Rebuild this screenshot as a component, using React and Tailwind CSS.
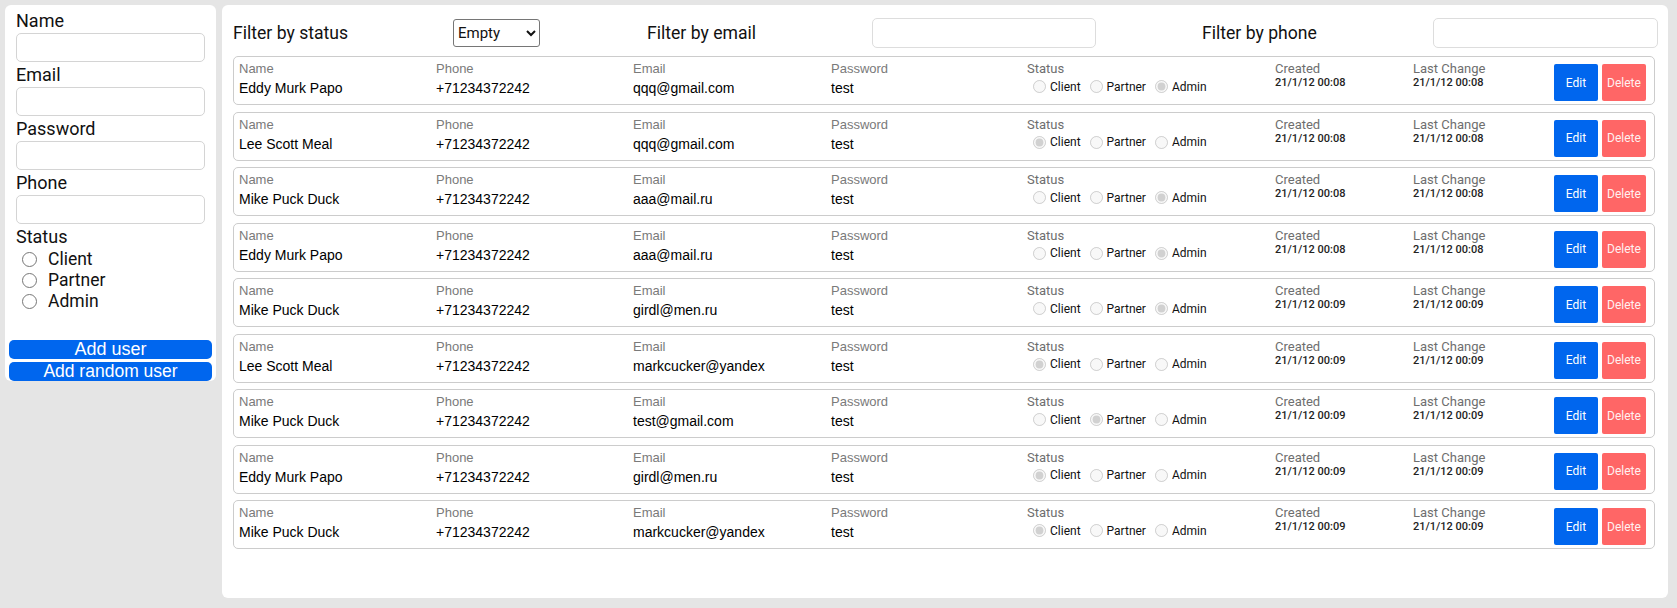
import React from "react";

const users = [
  { name: "Eddy Murk Papo", email: "qqq@gmail.com", status: "Admin", time: "00:08" },
  { name: "Lee Scott Meal", email: "qqq@gmail.com", status: "Client", time: "00:08" },
  { name: "Mike Puck Duck", email: "aaa@mail.ru", status: "Admin", time: "00:08" },
  { name: "Eddy Murk Papo", email: "aaa@mail.ru", status: "Admin", time: "00:08" },
  { name: "Mike Puck Duck", email: "girdl@men.ru", status: "Admin", time: "00:09" },
  { name: "Lee Scott Meal", email: "markcucker@yandex", status: "Client", time: "00:09" },
  { name: "Mike Puck Duck", email: "test@gmail.com", status: "Partner", time: "00:09" },
  { name: "Eddy Murk Papo", email: "girdl@men.ru", status: "Client", time: "00:09" },
  { name: "Mike Puck Duck", email: "markcucker@yandex", status: "Client", time: "00:09" },
];

const arial = "font-['Liberation_Sans',Arial,sans-serif]";

function Field({ label, value }) {
  return (
    <div className={arial}>
      <div className="text-[13px] leading-[15px] text-[#7a7a7a]">{label}</div>
      <div className="mt-[4px] text-[14px] leading-[16px] text-black">{value}</div>
    </div>
  );
}

function DateField({ label, value }) {
  return (
    <div>
      <div className="text-[13px] leading-[15px] text-[#6e6e6e]">{label}</div>
      <div className="text-[11px] leading-[13px] font-medium text-[#222]">{value}</div>
    </div>
  );
}

function UserCard({ user, idx }) {
  const statuses = ["Client", "Partner", "Admin"];
  return (
    <div className="h-[49px] mr-[3px] border border-[#cccccc] rounded-[5px] pl-[5px] pr-[8px] pt-[4px] grid grid-cols-[197px_197px_198px_196px_248px_138px_141px_auto] items-start">
      <Field label="Name" value={user.name} />
      <Field label="Phone" value="+71234372242" />
      <Field label="Email" value={user.email} />
      <Field label="Password" value="test" />
      <div>
        <div className="text-[13px] leading-[15px] text-[#6e6e6e]">Status</div>
        <div className="flex items-center h-[15px] mt-[3px] text-[12px] text-[#111]">
          {statuses.map((s, i) => (
            <React.Fragment key={s}>
              <input
                type="radio"
                name={`status-${idx}`}
                disabled
                checked={user.status === s}
                readOnly
                className={`w-[13px] h-[13px] mr-[4px] ${i === 0 ? "ml-[6px]" : "ml-[9px]"}`}
              />
              <span>{s}</span>
            </React.Fragment>
          ))}
        </div>
      </div>
      <DateField label="Created" value={`21/1/12 ${user.time}`} />
      <DateField label="Last Change" value={`21/1/12 ${user.time}`} />
      <div className="flex gap-[4px] mt-[3px]">
        <button className="w-[44px] h-[37px] bg-[#0066ee] text-white text-[12px] rounded-[2px]">Edit</button>
        <button className="w-[44px] h-[37px] bg-[#ff6666] text-[#fff0f0] text-[12px] rounded-[2px] whitespace-nowrap">Delete</button>
      </div>
    </div>
  );
}

function FormField({ label }) {
  return (
    <>
      <div className="text-[18px] leading-[25px]">{label}</div>
      <input type="text" className="w-full h-[29px] border border-[#d4d4d4] rounded-[5px] bg-white" />
    </>
  );
}

export default function App() {
  return (
    <div className="min-h-screen w-full bg-[#e5e5e5] flex items-start gap-[6px] pt-[5px] pl-[5px] pr-[9px] font-['Roboto',sans-serif] text-[#111]">
      {/* left form */}
      <div className="w-[211px] shrink-0 bg-white rounded-[6px] px-[4px] pt-[3px]">
        <div className="px-[7px]">
          <FormField label="Name" />
          <FormField label="Email" />
          <FormField label="Password" />
          <FormField label="Phone" />
          <div className="text-[18px] leading-[25px]">Status</div>
          {["Client", "Partner", "Admin"].map((s) => (
            <label key={s} className="flex items-center h-[21px] text-[17.5px]">
              <input type="radio" name="new-status" className="w-[15px] h-[15px] ml-[6px] mr-[11px]" />
              <span>{s}</span>
            </label>
          ))}
        </div>
        <div className={`mt-[28px] flex flex-col gap-[3px] ${arial}`}>
          <button className="h-[19px] bg-[#0066ee] text-white text-[18px] leading-[19px] rounded-[5px]">Add user</button>
          <button className="h-[19px] bg-[#0066ee] text-white text-[17.5px] leading-[19px] rounded-[5px]">Add random user</button>
        </div>
      </div>

      {/* right list */}
      <div className="flex-1 h-[593px] bg-white rounded-[6px] pt-[13px] pl-[11px] pr-[10px]">
        <div className="grid grid-cols-[220px_194px_225px_330px_231px_225px] items-center h-[30px] text-[17.6px]">
          <span>Filter by status</span>
          <select className="w-[87px] h-[28px] border border-[#767676] rounded-[3px] bg-white text-[15px] pl-0">
            <option>Empty</option>
            <option>Client</option>
            <option>Partner</option>
            <option>Admin</option>
          </select>
          <span>Filter by email</span>
          <input type="text" className="w-[224px] h-[30px] border border-[#dddddd] rounded-[5px]" />
          <span>Filter by phone</span>
          <input type="text" className="w-[225px] h-[30px] border border-[#dddddd] rounded-[5px]" />
        </div>
        <div className="mt-[8px] flex flex-col gap-[6.5px]">
          {users.map((u, i) => (
            <UserCard key={i} user={u} idx={i} />
          ))}
        </div>
      </div>
    </div>
  );
}
